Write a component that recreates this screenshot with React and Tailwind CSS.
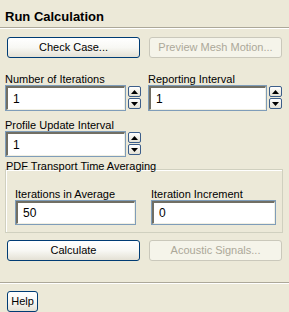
import React from 'react'

const font = { fontFamily: '"Liberation Sans", Arial, sans-serif' }

function XpButton({ label, disabled, className = '' }) {
  return (
    <div
      className={
        'flex h-[21px] items-center justify-center rounded-[3px] border text-[11px] ' +
        (disabled
          ? 'border-[#cac8bb] bg-[#f5f4ea] text-[#aca899] '
          : 'border-[#003c74] bg-gradient-to-b from-white via-[#f8f8f4] to-[#e4e1d5] text-black ') +
        className
      }
    >
      {label}
    </div>
  )
}

function TextBox({ value, className = '' }) {
  return (
    <div className={'border border-[#7f9db9] bg-white ' + className}>
      <div className="flex h-full items-center border-t-2 border-l-2 border-r border-b border-t-[#716f64] border-l-[#716f64] border-r-[#f1efe2] border-b-[#f1efe2] pl-[5px] text-[12px] text-black">
        {value}
      </div>
    </div>
  )
}

function Arrow({ up }) {
  return (
    <div className="flex h-[11px] w-[13px] items-center justify-center rounded-[2px] border border-[#3c5e8a] bg-gradient-to-b from-white to-[#e4e1d5]">
      <svg width="7" height="4" viewBox="0 0 7 4">
        {up ? <path d="M0 4 L3.5 0 L7 4 Z" fill="#000" /> : <path d="M0 0 L3.5 4 L7 0 Z" fill="#000" />}
      </svg>
    </div>
  )
}

function Spinner() {
  return (
    <div className="flex flex-col gap-[1px] pt-[1px]">
      <Arrow up />
      <Arrow />
    </div>
  )
}

function Field({ label, value, width }) {
  return (
    <div className="flex flex-col">
      <div className="h-[12px] text-[11px] leading-[12px] text-black">{label}</div>
      <div className="flex gap-[2px]">
        <TextBox value={value} className={width + ' h-[26px]'} />
        <Spinner />
      </div>
    </div>
  )
}

export default function App() {
  return (
    <div className="h-[312px] w-[289px] overflow-hidden bg-[#ece9d8]" style={font}>
      <div className="pl-[5px] pt-[9px] text-[13px] font-bold leading-[16px] text-black">Run Calculation</div>
      <div className="mt-[2px] h-[2px] border-t border-b border-t-[#aca899] border-b-white" />

      <div className="mt-[8px] flex gap-[9px] px-[7px]">
        <XpButton label="Check Case..." className="w-[133px]" />
        <XpButton label="Preview Mesh Motion..." disabled className="w-[133px]" />
      </div>

      <div className="mt-[15px] flex gap-[7px] pl-[5px]">
        <Field label="Number of Iterations" value="1" width="w-[121px]" />
        <Field label="Reporting Interval" value="1" width="w-[119px]" />
      </div>

      <div className="mt-[8px] pl-[5px]">
        <Field label="Profile Update Interval" value="1" width="w-[121px]" />
      </div>

      <div className="mt-[3px] pl-[6px] text-[11px] leading-[12px] text-black">PDF Transport Time Averaging</div>
      <div className="ml-[5px] mt-[-3px] h-[64px] w-[278px] border border-[#d0d0bf] shadow-[inset_1px_1px_0_#fff]">
        <div className="mt-[18px] flex gap-[15px] pl-[9px]">
          <div className="flex flex-col">
            <div className="h-[12px] text-[11px] leading-[12px]">Iterations in Average</div>
            <TextBox value="50" className="h-[25px] w-[121px]" />
          </div>
          <div className="flex flex-col">
            <div className="h-[12px] text-[11px] leading-[12px]">Iteration Increment</div>
            <TextBox value="0" className="h-[25px] w-[125px]" />
          </div>
        </div>
      </div>

      <div className="mt-[7px] flex gap-[9px] px-[7px]">
        <XpButton label="Calculate" className="w-[133px]" />
        <XpButton label="Acoustic Signals..." disabled className="w-[133px]" />
      </div>

      <div className="mt-[21px] h-[2px] border-t border-b border-t-[#aca899] border-b-white" />

      <div className="mt-[7px] pl-[7px]">
        <XpButton label="Help" className="w-[31px]" />
      </div>
    </div>
  )
}
